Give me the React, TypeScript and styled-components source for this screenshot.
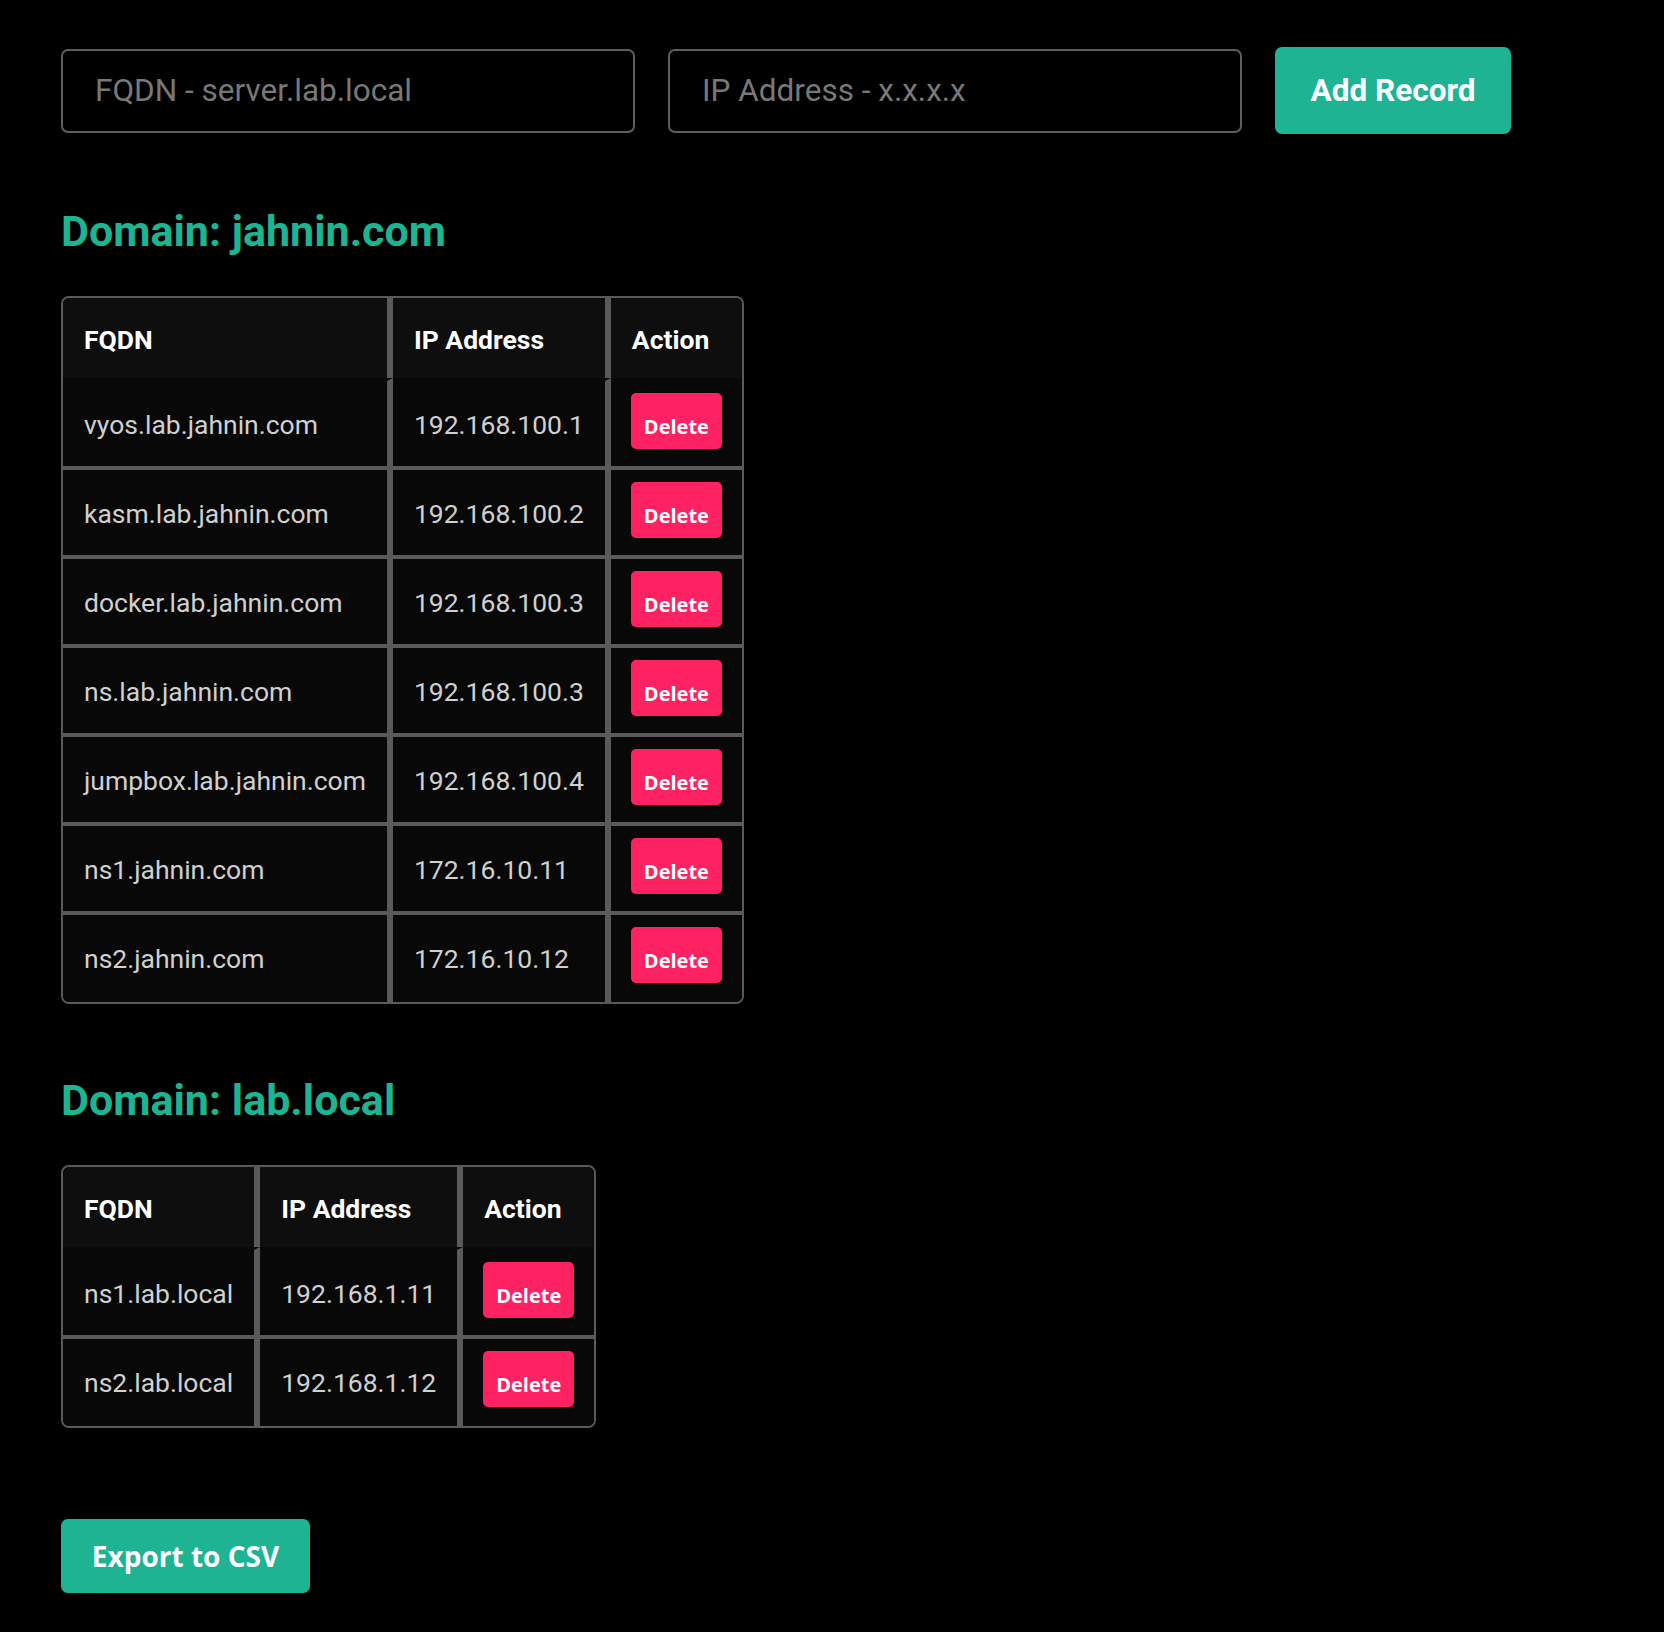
import React from "react";
import styled, { createGlobalStyle } from "styled-components";

const GlobalStyle = createGlobalStyle`
  html, body {
    margin: 0;
    background: #000;
  }
  body {
    font-family: Roboto, "Liberation Sans", sans-serif;
  }
`;

const Page = styled.div`
  padding: 47px 61px 40px;
  display: flex;
  flex-direction: column;
  align-items: flex-start;
`;

const FormRow = styled.div`
  display: flex;
  align-items: center;
  gap: 33px;
`;

const TextInput = styled.input`
  box-sizing: border-box;
  width: 574px;
  height: 84px;
  background: #000;
  border: 2px solid #5e5e5e;
  border-radius: 7px;
  padding: 0 32px;
  font: 400 31.5px Roboto, "Liberation Sans", sans-serif;
  color: #ddd;
  outline: none;
  &::placeholder {
    color: #787878;
  }
`;

const PrimaryButton = styled.button<{ $w: number; $h: number; $size: number; $family: string }>`
  box-sizing: border-box;
  width: ${(p) => p.$w}px;
  height: ${(p) => p.$h}px;
  background: #1eb393;
  color: #fff;
  border: none;
  border-radius: 7px;
  padding: 0;
  font-weight: 700;
  font-size: ${(p) => p.$size}px;
  font-family: ${(p) => p.$family};
  cursor: pointer;
`;

const Section = styled.section`
  display: flex;
  flex-direction: column;
  align-items: flex-start;
  &:first-of-type h2 {
    margin-top: 72px;
  }
`;

const Heading = styled.h2`
  margin: 71px 0 40px;
  font: 700 43px/50px Roboto, "Liberation Sans", sans-serif;
  color: #1db492;
`;

const Table = styled.table`
  border-collapse: separate;
  border-spacing: 0;
  border: 2px solid #5a5a5a;
  border-radius: 8px;
  font-family: Roboto, "Liberation Sans", sans-serif;
`;

const HeadCell = styled.th`
  background: #0e0e0e;
  color: #fff;
  font: 700 26.5px/28px Roboto, "Liberation Sans", sans-serif;
  text-align: left;
  white-space: nowrap;
  padding: 28px 21px 24px;
  border-right: 6px solid #5a5a5a;
  vertical-align: baseline;
  &:first-child {
    border-top-left-radius: 6px;
  }
  &:last-child {
    border-right: none;
    border-top-right-radius: 6px;
  }
`;

const Row = styled.tr`
  &:first-child td {
    border-top-color: #080808;
    border-top-width: 3px;
  }
  &:last-child td {
    padding-bottom: 19px;
  }
  &:last-child td:first-child {
    border-bottom-left-radius: 6px;
  }
  &:last-child td:last-child {
    border-bottom-right-radius: 6px;
  }
`;

const Cell = styled.td`
  background: #080808;
  color: #d0d0d0;
  font: 400 26.5px/28px Roboto, "Liberation Sans", sans-serif;
  text-align: left;
  white-space: nowrap;
  padding: 12px 21px 17px;
  border-right: 6px solid #5a5a5a;
  border-top: 4px solid #5a5a5a;
  vertical-align: baseline;
  &:last-child {
    border-right: none;
    padding-left: 20px;
    padding-right: 20px;
  }
`;

const DeleteButton = styled.button`
  display: inline-block;
  vertical-align: baseline;
  box-sizing: border-box;
  height: 56px;
  padding: 20px 13px 9px;
  font: 700 20px/27px "Open Sans", "DejaVu Sans", sans-serif;
  background: #ff2262;
  color: #fff;
  border: none;
  border-radius: 5px;
  cursor: pointer;
`;

const ExportWrap = styled.div`
  margin-top: 91px;
`;

type Rec = { fqdn: string; ip: string };

const domains: { name: string; records: Rec[] }[] = [
  {
    name: "jahnin.com",
    records: [
      { fqdn: "vyos.lab.jahnin.com", ip: "192.168.100.1" },
      { fqdn: "kasm.lab.jahnin.com", ip: "192.168.100.2" },
      { fqdn: "docker.lab.jahnin.com", ip: "192.168.100.3" },
      { fqdn: "ns.lab.jahnin.com", ip: "192.168.100.3" },
      { fqdn: "jumpbox.lab.jahnin.com", ip: "192.168.100.4" },
      { fqdn: "ns1.jahnin.com", ip: "172.16.10.11" },
      { fqdn: "ns2.jahnin.com", ip: "172.16.10.12" },
    ],
  },
  {
    name: "lab.local",
    records: [
      { fqdn: "ns1.lab.local", ip: "192.168.1.11" },
      { fqdn: "ns2.lab.local", ip: "192.168.1.12" },
    ],
  },
];

export default function App() {
  return (
    <>
      <GlobalStyle />
      <Page>
        <FormRow>
          <TextInput placeholder="FQDN - server.lab.local" />
          <TextInput placeholder="IP Address - x.x.x.x" />
          <PrimaryButton $w={236} $h={87} $size={31.5} $family={`Roboto, "Liberation Sans", sans-serif`}>
            Add Record
          </PrimaryButton>
        </FormRow>

        {domains.map((d) => (
          <Section key={d.name}>
            <Heading>Domain: {d.name}</Heading>
            <Table>
              <thead>
                <tr>
                  <HeadCell>FQDN</HeadCell>
                  <HeadCell>IP Address</HeadCell>
                  <HeadCell>Action</HeadCell>
                </tr>
              </thead>
              <tbody>
                {d.records.map((r, j) => (
                  <Row key={j}>
                    <Cell>{r.fqdn}</Cell>
                    <Cell>{r.ip}</Cell>
                    <Cell>
                      <DeleteButton>Delete</DeleteButton>
                    </Cell>
                  </Row>
                ))}
              </tbody>
            </Table>
          </Section>
        ))}

        <ExportWrap>
          <PrimaryButton $w={249} $h={74} $size={28} $family={`"Open Sans", "DejaVu Sans", sans-serif`}>
            Export to CSV
          </PrimaryButton>
        </ExportWrap>
      </Page>
    </>
  );
}
